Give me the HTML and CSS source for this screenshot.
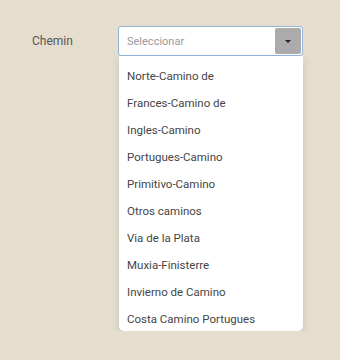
FILE: index.html
```html
<!DOCTYPE html>
<html>
<head>
<meta charset="utf-8">
<link rel="stylesheet" href="styles.css">
</head>
<body>
<div class="row">
  <div class="label">Chemin</div>
  <div class="select">
    <div class="field">
      <span class="placeholder">Seleccionar</span>
      <span class="btn"><span class="caret"></span></span>
    </div>
    <div class="menu">
      <div class="item">Norte-Camino de</div>
      <div class="item">Frances-Camino de</div>
      <div class="item">Ingles-Camino</div>
      <div class="item">Portugues-Camino</div>
      <div class="item">Primitivo-Camino</div>
      <div class="item">Otros caminos</div>
      <div class="item">Via de la Plata</div>
      <div class="item">Muxia-Finisterre</div>
      <div class="item">Invierno de Camino</div>
      <div class="item">Costa Camino Portugues</div>
    </div>
  </div>
</div>
</body>
</html>
```
FILE: styles.css
```css
html, body {
  margin: 0;
  padding: 0;
  background: #e5dece;
  font-family: Roboto, "Liberation Sans", sans-serif;
  font-size: 12px;
}
.row {
  display: flex;
  align-items: flex-start;
  padding: 26px 0 0 32px;
}
.label {
  width: 86px;
  line-height: 30px;
  color: #555;
}
.select {
  width: 185px;
}
.field {
  box-sizing: border-box;
  height: 30px;
  border: 1px solid #92b8de;
  border-radius: 3px;
  background: #fff;
  display: flex;
  align-items: center;
  justify-content: space-between;
  padding: 0 1px 0 8px;
}
.placeholder {
  color: #9a9a9a;
  font-size: 11px;
}
.btn {
  width: 26px;
  height: 26px;
  background: #ababab;
  border-radius: 2px;
  display: flex;
  align-items: center;
  justify-content: center;
}
.caret {
  width: 0;
  height: 0;
  border-left: 3px solid transparent;
  border-right: 3px solid transparent;
  border-top: 3px solid #222;
}
.menu {
  margin-left: 1px;
  padding-top: 6.5px;
  box-sizing: border-box;
  background: #fff;
  border-radius: 0 0 5px 5px;
  box-shadow: 0 3px 8px rgba(0, 0, 0, 0.12);
  height: 275px;
  overflow: hidden;
}
.item {
  padding: 0 8px;
  font-size: 11.5px;
  line-height: 27.1px;
  color: #454545;
  white-space: nowrap;
}
```
